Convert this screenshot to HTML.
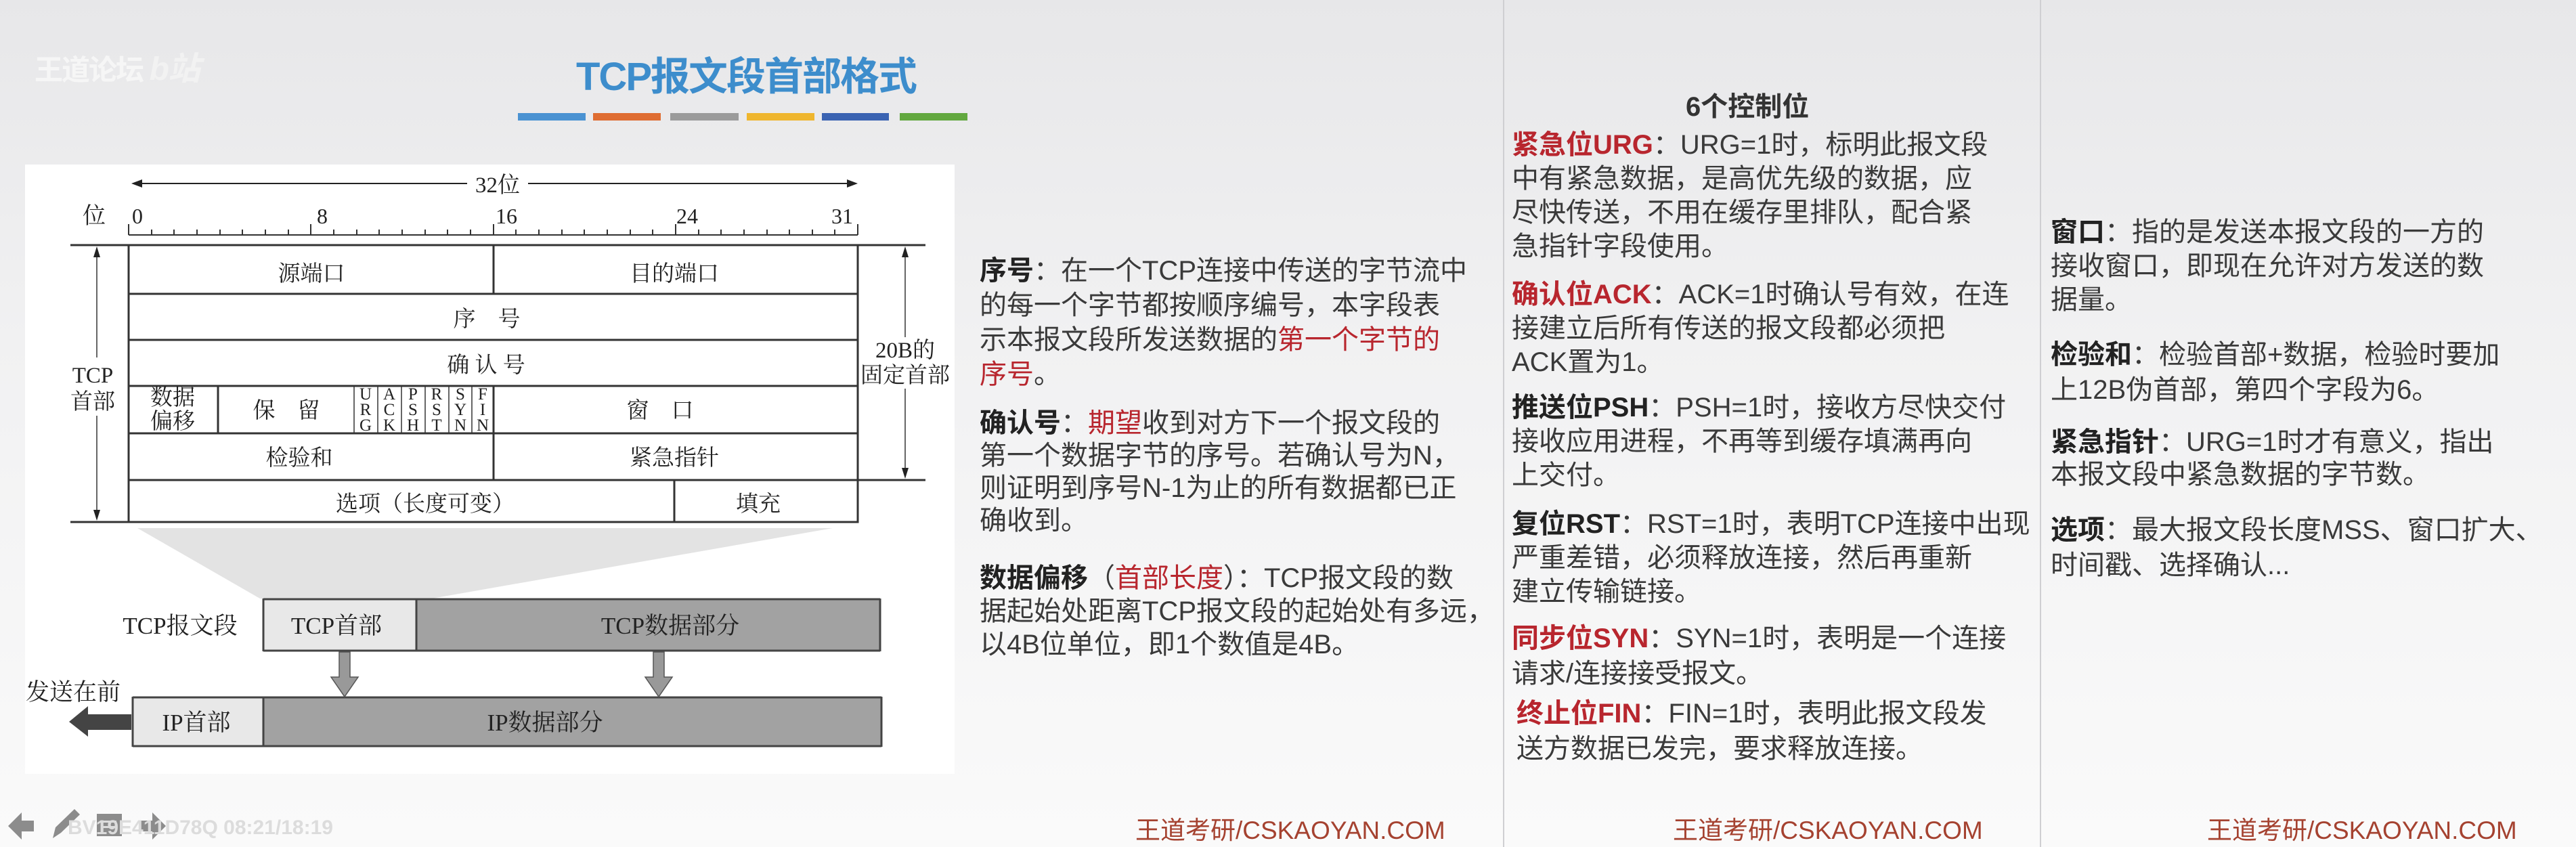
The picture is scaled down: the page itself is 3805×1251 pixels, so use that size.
<!DOCTYPE html>
<html><head><meta charset="utf-8">
<style>
*{margin:0;padding:0;box-sizing:border-box}
body{width:3805px;height:1251px;overflow:hidden;position:relative;background:linear-gradient(#e7e7e9 0%,#f1f1f2 40%,#fafafa 100%);font-family:"Liberation Sans","Noto Sans CJK SC",sans-serif;color:#333}
.a{position:absolute;white-space:nowrap}
.t{font-size:40px;line-height:50px;color:#3a3a3a}
.r{color:#b8262e;font-weight:bold}
.b{font-weight:bold;color:#222}
.rr{color:#b8262e}
.foot{font-size:37px;color:#a54230;font-family:"Liberation Sans","Noto Sans CJK SC",sans-serif}
</style></head><body>
<div class="a" style="left:2220px;top:0;width:2px;height:1251px;background:#cfcfd2"></div>
<div class="a" style="left:3013px;top:0;width:2px;height:1251px;background:#cfcfd2"></div>
<div class="a" style="left:37px;top:243px;width:1373px;height:900px;background:#fff"></div>

<div class="a" style="left:51px;top:62px;font-size:42px;color:#f6f6f6;font-weight:bold;letter-spacing:-2px">王道论坛 <span style="font-size:48px;color:#f2f2f2;font-style:italic">b站</span></div>
<div class="a" style="left:851px;top:66px;font-size:58px;font-weight:bold;color:#3d8dcc;letter-spacing:-2px">TCP报文段首部格式</div>
<div class="a" style="left:765px;top:167px;width:100px;height:11px;background:#4a92d2"></div>
<div class="a" style="left:876px;top:167px;width:100px;height:11px;background:#df6d32"></div>
<div class="a" style="left:990px;top:167px;width:101px;height:11px;background:#9b9b9b"></div>
<div class="a" style="left:1103px;top:167px;width:100px;height:11px;background:#efb62e"></div>
<div class="a" style="left:1214px;top:167px;width:99px;height:11px;background:#3a63b2"></div>
<div class="a" style="left:1329px;top:167px;width:100px;height:11px;background:#62a83f"></div>

<svg class="a" style="left:0;top:0" width="1420" height="1251" viewBox="0 0 1420 1251" font-family="Liberation Serif,Noto Serif CJK SC,serif" fill="#222">
<polygon points="203,780 1230,780 638,884 384,884" fill="#e3e3e3"/>
<line x1="200" y1="271" x2="690" y2="271" stroke="#222" stroke-width="2"/>
<line x1="780" y1="271" x2="1260" y2="271" stroke="#222" stroke-width="2"/>
<polygon points="194,271 210,265 210,277"/><polygon points="1267,271 1251,265 1251,277"/>
<text x="735" y="284" font-size="33" text-anchor="middle">32位</text>
<text x="139" y="330" font-size="34" text-anchor="middle">位</text>
<g font-size="32"><text x="195" y="330">0</text><text x="468" y="330">8</text><text x="732" y="330">16</text><text x="999" y="330">24</text><text x="1228" y="330">31</text></g>
<g stroke="#333" stroke-width="2">
<line x1="190" y1="347" x2="1267" y2="347"/>
<path d="M190 331V347M224 339V347M257 339V347M291 339V347M325 339V347M358 339V347M392 339V347M426 339V347M459 331V347M493 339V347M527 339V347M560 339V347M594 339V347M628 339V347M661 339V347M695 339V347M729 331V347M762 339V347M796 339V347M830 339V347M863 339V347M897 339V347M931 339V347M964 339V347M998 331V347M1032 339V347M1065 339V347M1099 339V347M1133 339V347M1166 339V347M1200 339V347M1233 339V347M1267 331V347"/>
</g>
<g stroke="#333" stroke-width="3" fill="none">
<rect x="190" y="362" width="1077" height="409"/>
<line x1="104" y1="362" x2="1367" y2="362"/>
<line x1="1267" y1="709" x2="1367" y2="709"/>
<line x1="104" y1="771" x2="190" y2="771"/>
<line x1="190" y1="434" x2="1267" y2="434"/>
<line x1="190" y1="502" x2="1267" y2="502"/>
<line x1="190" y1="570" x2="1267" y2="570"/>
<line x1="190" y1="640" x2="1267" y2="640"/>
<line x1="190" y1="709" x2="1267" y2="709"/>
<line x1="729" y1="362" x2="729" y2="434"/>
<line x1="729" y1="570" x2="729" y2="709"/>
<line x1="996" y1="709" x2="996" y2="771"/>
<line x1="322" y1="570" x2="322" y2="640"/>
</g>
<g stroke="#333" stroke-width="1.5">
<path d="M523 570V640M558 570V640M593 570V640M628 570V640M663 570V640M697 570V640"/>
<line x1="143" y1="372" x2="143" y2="528"/><line x1="143" y1="614" x2="143" y2="762"/>
<line x1="1337" y1="372" x2="1337" y2="498"/><line x1="1337" y1="574" x2="1337" y2="700"/>
</g>
<polygon points="143,364 138,380 148,380"/><polygon points="143,769 138,753 148,753"/>
<polygon points="1337,364 1332,380 1342,380"/><polygon points="1337,707 1332,691 1342,691"/>
<g font-size="33" text-anchor="middle">
<text x="460" y="415">源端口</text><text x="996" y="415">目的端口</text>
<text x="719" y="482">序　号</text><text x="718" y="550">确 认 号</text>
<text x="255" y="598">数据</text><text x="255" y="633">偏移</text>
<text x="423" y="617">保　留</text><text x="975" y="617">窗　口</text>
<text x="442" y="687">检验和</text><text x="996" y="687">紧急指针</text>
<text x="628" y="755">选项（长度可变）</text><text x="1120" y="755">填充</text>
<text x="137" y="565">TCP</text><text x="137" y="604">首部</text>
<text x="1337" y="528">20B的</text><text x="1337" y="565">固定首部</text>
</g>
<g font-size="25" text-anchor="middle">
<text x="540" y="590">U</text><text x="540" y="613">R</text><text x="540" y="636">G</text>
<text x="575" y="590">A</text><text x="575" y="613">C</text><text x="575" y="636">K</text>
<text x="610" y="590">P</text><text x="610" y="613">S</text><text x="610" y="636">H</text>
<text x="645" y="590">R</text><text x="645" y="613">S</text><text x="645" y="636">T</text>
<text x="680" y="590">S</text><text x="680" y="613">Y</text><text x="680" y="636">N</text>
<text x="713" y="590">F</text><text x="713" y="613">I</text><text x="713" y="636">N</text>
</g>
<rect x="389" y="884" width="226" height="78" fill="#e8e8e8"/>
<rect x="615" y="884" width="685" height="78" fill="#a2a2a2"/>
<g stroke="#444" stroke-width="3" fill="none"><line x1="389" y1="885" x2="1300" y2="885"/><line x1="389" y1="961" x2="1300" y2="961"/><line x1="389" y1="884" x2="389" y2="962"/><line x1="615" y1="884" x2="615" y2="962"/><line x1="1300" y1="884" x2="1300" y2="962"/></g>
<rect x="196" y="1029" width="193" height="74" fill="#e8e8e8"/>
<rect x="389" y="1029" width="913" height="74" fill="#a2a2a2"/>
<g stroke="#444" stroke-width="3" fill="none"><line x1="196" y1="1030" x2="1302" y2="1030"/><line x1="196" y1="1102" x2="1302" y2="1102"/><line x1="196" y1="1029" x2="196" y2="1103"/><line x1="389" y1="1029" x2="389" y2="1103"/><line x1="1302" y1="1029" x2="1302" y2="1103"/></g>
<polygon points="501,963 517,963 517,1000 529,1000 509,1029 489,1000 501,1000" fill="#999" stroke="#555" stroke-width="1.5"/>
<polygon points="965,963 981,963 981,1000 993,1000 973,1029 953,1000 965,1000" fill="#999" stroke="#555" stroke-width="1.5"/>
<polygon points="194,1055 130,1055 130,1043 102,1066 130,1088 130,1078 194,1078" fill="#444"/>
<g font-size="35" text-anchor="middle">
<text x="266" y="936">TCP报文段</text><text x="497" y="936">TCP首部</text><text x="990" y="936">TCP数据部分</text>
<text x="290" y="1079">IP首部</text><text x="805" y="1079">IP数据部分</text><text x="108" y="1034">发送在前</text>
</g>
<g fill="#8c8c8c">
<polygon points="12,1220 32,1200 32,1212 50,1212 50,1228 32,1228 32,1240"/>
<polygon points="78,1238 82,1222 110,1195 118,1203 90,1230"/>
<rect x="143" y="1202" width="37" height="33"/>
<polygon points="245,1220 225,1200 225,1212 207,1212 207,1228 225,1228 225,1240"/>
</g>
<rect x="150" y="1212" width="22" height="3" fill="#ddd"/><rect x="150" y="1220" width="22" height="3" fill="#ddd"/>
<text x="100" y="1232" font-size="30" fill="#dcdcdc" font-family="Liberation Sans,sans-serif" font-weight="bold">BV19E411D78Q 08:21/18:19</text>
</svg>

<div class="a t" style="left:1447px;top:375px;line-height:51px">
<span class="b">序号</span>：在一个TCP连接中传送的字节流中<br>的每一个字节都按顺序编号，本字段表<br>示本报文段所发送数据的<span class="rr">第一个字节的</span><br><span class="rr">序号</span>。</div>
<div class="a t" style="left:1447px;top:601px;line-height:48px">
<span class="b">确认号</span>：<span class="rr">期望</span>收到对方下一个报文段的<br>第一个数据字节的序号。若确认号为N，<br>则证明到序号N-1为止的所有数据都已正<br>确收到。</div>
<div class="a t" style="left:1447px;top:830px;line-height:49px">
<span class="b">数据偏移</span>（<span class="rr">首部长度</span>）：TCP报文段的数<br>据起始处距离TCP报文段的起始处有多远，<br>以4B位单位，即1个数值是4B。</div>
<div class="a foot" style="left:1677px;top:1196px">王道考研/CSKAOYAN.COM</div>

<div class="a" style="left:2490px;top:125px;font-size:40px;font-weight:bold;color:#333">6个控制位</div>
<div class="a t" style="left:2233px;top:189px;line-height:50px"><span class="r">紧急位URG</span>：URG=1时，标明此报文段<br>中有紧急数据，是高优先级的数据，应<br>尽快传送，不用在缓存里排队，配合紧<br>急指针字段使用。</div>
<div class="a t" style="left:2233px;top:410px;line-height:50px"><span class="r">确认位ACK</span>：ACK=1时确认号有效，在连<br>接建立后所有传送的报文段都必须把<br>ACK置为1。</div>
<div class="a t" style="left:2233px;top:577px;line-height:50px"><span class="b">推送位PSH</span>：PSH=1时，接收方尽快交付<br>接收应用进程，不再等到缓存填满再向<br>上交付。</div>
<div class="a t" style="left:2233px;top:749px;line-height:50px"><span class="b">复位RST</span>：RST=1时，表明TCP连接中出现<br>严重差错，必须释放连接，然后再重新<br>建立传输链接。</div>
<div class="a t" style="left:2233px;top:917px;line-height:52px"><span class="r">同步位SYN</span>：SYN=1时，表明是一个连接<br>请求/连接接受报文。</div>
<div class="a t" style="left:2240px;top:1028px;line-height:52px"><span class="r">终止位FIN</span>：FIN=1时，表明此报文段发<br>送方数据已发完，要求释放连接。</div>
<div class="a foot" style="left:2471px;top:1196px">王道考研/CSKAOYAN.COM</div>

<div class="a t" style="left:3029px;top:318px;line-height:50px"><span class="b">窗口</span>：指的是发送本报文段的一方的<br>接收窗口，即现在允许对方发送的数<br>据量。</div>
<div class="a t" style="left:3029px;top:498px;line-height:52px"><span class="b">检验和</span>：检验首部+数据，检验时要加<br>上12B伪首部，第四个字段为6。</div>
<div class="a t" style="left:3029px;top:629px;line-height:48px"><span class="b">紧急指针</span>：URG=1时才有意义，指出<br>本报文段中紧急数据的字节数。</div>
<div class="a t" style="left:3029px;top:757px;line-height:52px"><span class="b">选项</span>：最大报文段长度MSS、窗口扩大、<br>时间戳、选择确认...</div>
<div class="a foot" style="left:3260px;top:1196px">王道考研/CSKAOYAN.COM</div>
</body></html>
